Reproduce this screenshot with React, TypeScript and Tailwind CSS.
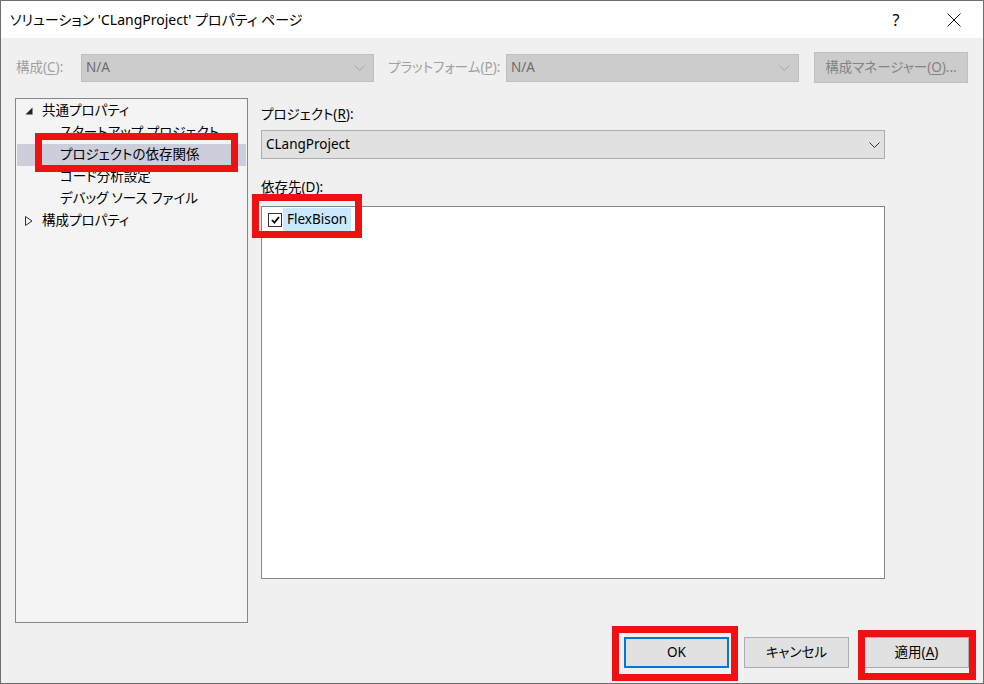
import React from "react";

const Chevron = ({ color }: { color: string }) => (
  <svg width="11" height="6" viewBox="0 0 11 6" fill="none">
    <path d="M0.5 0.5 L5.5 5.5 L10.5 0.5" stroke={color} strokeWidth="1" />
  </svg>
);

const U = ({ c }: { c: string }) => <span className="underline underline-offset-2">{c}</span>;

export default function App() {
  return (
    <div className="relative w-[984px] h-[684px] border border-[#6e6e6e] bg-[#f0f0f0] flex flex-col font-['Noto_Sans','Noto_Sans_CJK_JP',sans-serif] [font-feature-settings:'palt'] text-[13.5px] text-black leading-none overflow-hidden whitespace-nowrap">
      {/* title bar */}
      <div className="h-[37px] bg-white flex items-center pl-[9px] pr-[6px] shrink-0">
        <span className="text-[14px]">ソリューション 'CLangProject' プロパティ ページ</span>
        <div className="ml-auto flex items-center gap-[12px]">
          <div className="w-[46px] flex justify-center text-[16px]">?</div>
          <div className="w-[46px] flex justify-center">
            <svg width="14" height="14" viewBox="0 0 14 14">
              <path d="M0.5 0.5 L13.5 13.5 M13.5 0.5 L0.5 13.5" stroke="#111" strokeWidth="1" />
            </svg>
          </div>
        </div>
      </div>

      {/* config row */}
      <div className="mt-[14px] h-[31px] flex items-center pl-[15px] shrink-0">
        <div className="w-[65px] text-[#a0a0a0]">
          構成(<U c="C" />):
        </div>
        <div className="w-[293px] h-[28px] bg-[#cccccc] border border-[#bfbfbf] flex items-center pl-[4px] pr-[8px] text-[#6d6d6d]">
          <span>N/A</span>
          <span className="ml-auto flex">
            <Chevron color="#a8a8a8" />
          </span>
        </div>
        <div className="ml-[14px] w-[118px] text-[#a0a0a0]">
          プラットフォーム(<U c="P" />):
        </div>
        <div className="w-[293px] h-[28px] bg-[#cccccc] border border-[#bfbfbf] flex items-center pl-[4px] pr-[8px] text-[#6d6d6d]">
          <span>N/A</span>
          <span className="ml-auto flex">
            <Chevron color="#a8a8a8" />
          </span>
        </div>
        <div className="ml-[15px] w-[154px] h-[31px] bg-[#cccccc] border border-[#bfbfbf] flex items-center justify-center text-[#838383]">
          構成マネージャー(<U c="O" />)...
        </div>
      </div>

      {/* main */}
      <div className="mt-[15px] flex shrink-0">
        <div className="ml-[14px] w-[233px] h-[525px] bg-[#f4f4f4] border border-[#828790] pt-[1px] flex flex-col">
          <div className="h-[22px] flex items-center pl-[9px]">
            <svg width="8" height="8" viewBox="0 0 8 8">
              <path d="M7.5 0.5 L7.5 7.5 L0.5 7.5 Z" fill="#222" />
            </svg>
            <span className="ml-[9px]">共通プロパティ</span>
          </div>
          <div className="h-[22px] flex items-center pl-[44px]">スタートアップ プロジェクト</div>
          <div className="h-[22px] mx-[1px] bg-[#cccedb] flex items-center pl-[43px]">プロジェクトの依存関係</div>
          <div className="h-[22px] flex items-center pl-[44px]">コード分析設定</div>
          <div className="h-[22px] flex items-center pl-[44px]">デバッグ ソース ファイル</div>
          <div className="h-[22px] flex items-center pl-[9px]">
            <svg width="8" height="10" viewBox="0 0 8 10">
              <path d="M0.5 0.5 L7 5 L0.5 9.5 Z" fill="none" stroke="#333" strokeWidth="1" />
            </svg>
            <span className="ml-[9px]">構成プロパティ</span>
          </div>
        </div>

        <div className="ml-[13px] w-[624px] pt-[7px] flex flex-col">
          <div className="h-[20px] flex items-center">
            プロジェクト(<U c="R" />):
          </div>
          <div className="mt-[5px] h-[29px] bg-[#e1e1e1] border border-[#adadad] flex items-center pl-[4px] pr-[4px]">
            <span>CLangProject</span>
            <span className="ml-auto flex">
              <Chevron color="#333" />
            </span>
          </div>
          <div className="mt-[19px] h-[20px] flex items-center">
            依存先(<U c="D" />):
          </div>
          <div className="mt-[8px] h-[373px] bg-white border border-[#828790] pt-[1px] pl-[6px]">
            <div className="flex items-center h-[23px]">
              <div className="w-[14px] h-[14px] border border-[#333] bg-white flex items-center justify-center">
                <svg width="9" height="8" viewBox="0 0 9 8">
                  <path d="M1 4 L3.4 6.6 L8 1" fill="none" stroke="#000" strokeWidth="1.8" />
                </svg>
              </div>
              <div className="ml-[1px] h-[23px] bg-[#cce8ff] px-[4px] flex items-center">FlexBison</div>
            </div>
          </div>
        </div>
      </div>

      {/* buttons */}
      <div className="mt-[14px] flex justify-end gap-[15px] pr-[14px] shrink-0">
        <div className="w-[105px] h-[31px] bg-[#e1e1e1] border-2 border-[#0078d7] flex items-center justify-center">OK</div>
        <div className="w-[105px] h-[31px] bg-[#e1e1e1] border border-[#adadad] flex items-center justify-center">キャンセル</div>
        <div className="w-[105px] h-[31px] bg-[#e1e1e1] border border-[#adadad] flex items-center justify-center">
          適用(<U c="A" />)
        </div>
      </div>

      {/* red annotation boxes */}
      <div className="absolute left-[34px] top-[132px] w-[203px] h-[39px] border-[7px] border-[#ee1111]" />
      <div className="absolute left-[251px] top-[193px] w-[110px] h-[44px] border-[7px] border-[#ee1111]" />
      <div className="absolute left-[611px] top-[625px] w-[126px] h-[55px] border-[7px] border-[#ee1111]" />
      <div className="absolute left-[857px] top-[629px] w-[118px] h-[50px] border-[7px] border-[#ee1111]" />
    </div>
  );
}
